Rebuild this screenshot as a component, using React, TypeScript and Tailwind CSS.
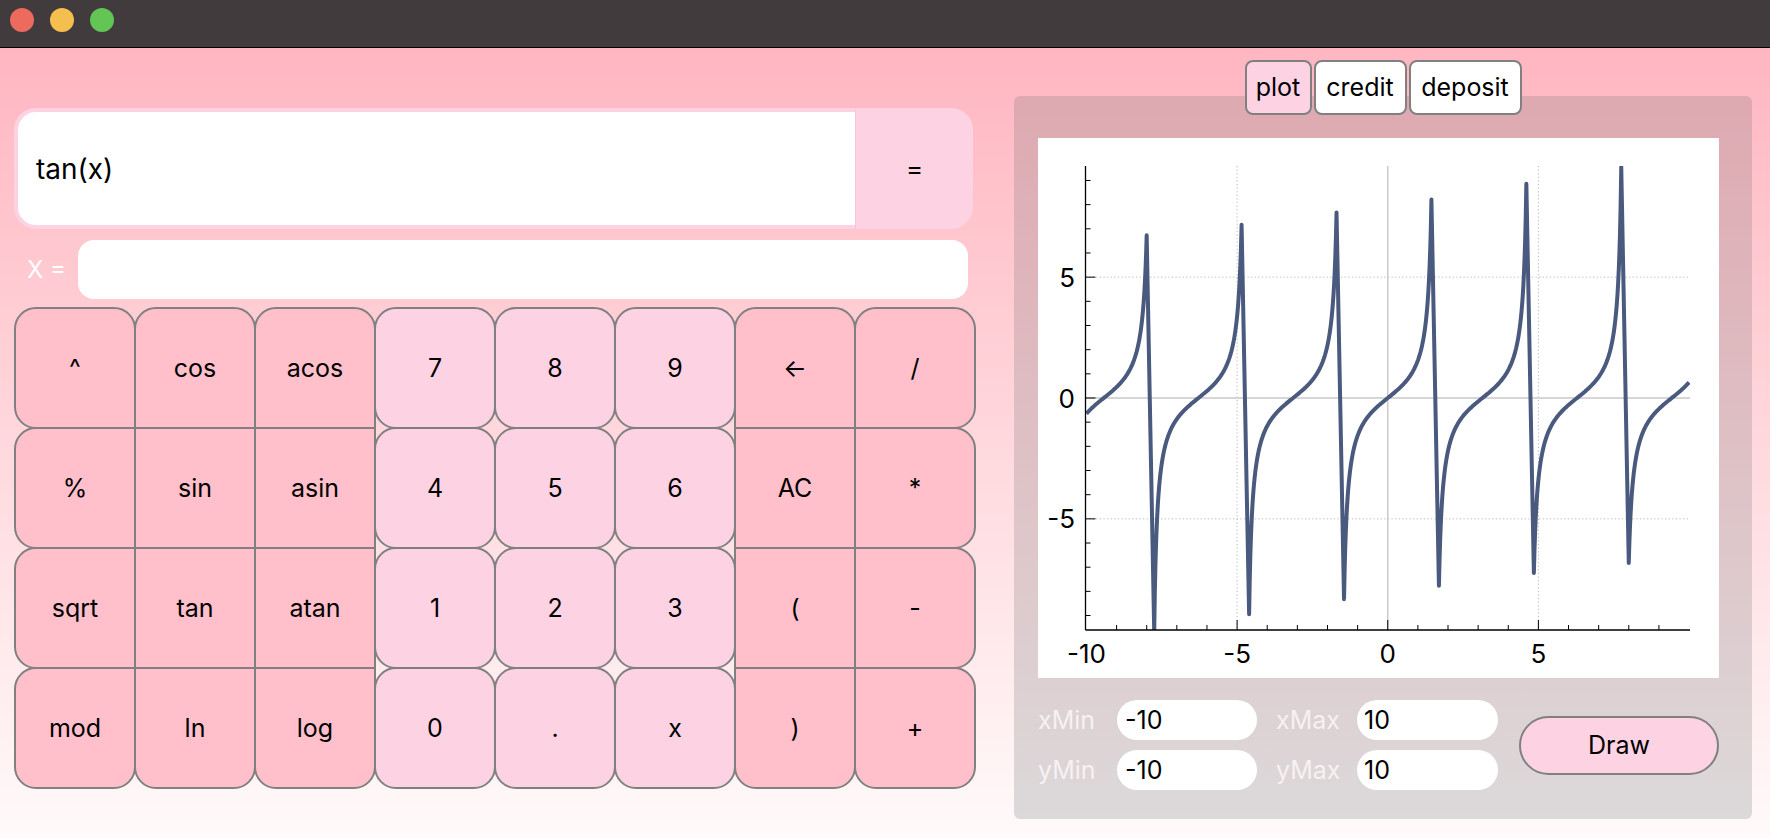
import React from "react";

type B = { t: string; d?: boolean; r: string };

const rows: B[][] = [
  [
    { t: "^", r: "rounded-tl-[22px] rounded-tr-[22px] rounded-bl-[22px]" },
    { t: "cos", r: "rounded-tl-[22px] rounded-tr-[22px]" },
    { t: "acos", r: "rounded-tl-[22px] rounded-tr-[22px]" },
    { t: "7", d: true, r: "rounded-[22px]" },
    { t: "8", d: true, r: "rounded-[22px]" },
    { t: "9", d: true, r: "rounded-[22px]" },
    { t: "←", r: "rounded-tl-[22px] rounded-tr-[22px]" },
    { t: "/", r: "rounded-tl-[22px] rounded-tr-[22px] rounded-br-[22px]" },
  ],
  [
    { t: "%", r: "rounded-tl-[22px] rounded-bl-[22px]" },
    { t: "sin", r: "" },
    { t: "asin", r: "" },
    { t: "4", d: true, r: "rounded-[22px]" },
    { t: "5", d: true, r: "rounded-[22px]" },
    { t: "6", d: true, r: "rounded-[22px]" },
    { t: "AC", r: "" },
    { t: "*", r: "rounded-tr-[22px] rounded-br-[22px]" },
  ],
  [
    { t: "sqrt", r: "rounded-tl-[22px] rounded-bl-[22px]" },
    { t: "tan", r: "" },
    { t: "atan", r: "" },
    { t: "1", d: true, r: "rounded-[22px]" },
    { t: "2", d: true, r: "rounded-[22px]" },
    { t: "3", d: true, r: "rounded-[22px]" },
    { t: "(", r: "" },
    { t: "-", r: "rounded-tr-[22px] rounded-br-[22px]" },
  ],
  [
    { t: "mod", r: "rounded-tl-[22px] rounded-bl-[22px] rounded-br-[22px]" },
    { t: "ln", r: "rounded-bl-[22px] rounded-br-[22px]" },
    { t: "log", r: "rounded-bl-[22px] rounded-br-[22px]" },
    { t: "0", d: true, r: "rounded-[22px]" },
    { t: ".", d: true, r: "rounded-[22px]" },
    { t: "x", d: true, r: "rounded-[22px]" },
    { t: ")", r: "rounded-bl-[22px] rounded-br-[22px]" },
    { t: "+", r: "rounded-tr-[22px] rounded-bl-[22px] rounded-br-[22px]" },
  ],
];

const W = 681;
const H = 540;
const X = (x: number) => 349.75 + x * 30.13;
const Y = (y: number) => 260 - y * 24.17;

function buildPath(): string {
  const A = [-2.5, -1.5, -0.5, 0.5, 1.5, 2.5].map((k) => k * Math.PI);
  const D = [0.1474, 0.1386, 0.1295, 0.1212, 0.1124, 0.1042];
  const E = [0.103, 0.1113, 0.1196, 0.128, 0.1372, 0.1454];
  const pts: [number, number][] = [];
  let start = -10;
  for (let i = 0; i <= 6; i++) {
    const end = i < 6 ? A[i] - D[i] : 10;
    for (let x = start; x < end; x += 0.02) pts.push([x, Math.tan(x)]);
    pts.push([end, Math.tan(end)]);
    if (i < 6) start = A[i] + E[i];
  }
  return pts
    .map((p, i) => `${i === 0 ? "M" : "L"}${X(p[0]).toFixed(2)} ${Y(p[1]).toFixed(2)}`)
    .join(" ");
}

function Chart() {
  const ax = 47.5;
  const axR = 652;
  const top = 28;
  const bot = 492;
  const d = buildPath();
  const ticks: number[] = [];
  for (let i = -9; i <= 9; i++) ticks.push(i);
  return (
    <svg width={W} height={H} viewBox={`0 0 ${W} ${H}`} className="block">
      <defs>
        <clipPath id="plotclip">
          <rect x={ax} y={top} width={axR - ax} height={bot - top} />
        </clipPath>
      </defs>
      {[-5, 5].map((v) => (
        <line key={"gx" + v} x1={X(v)} x2={X(v)} y1={top} y2={bot} stroke="#b8b8b8" strokeWidth={1} strokeDasharray="1.2 2.4" />
      ))}
      {[-5, 5].map((v) => (
        <line key={"gy" + v} x1={ax} x2={axR} y1={Y(v)} y2={Y(v)} stroke="#b8b8b8" strokeWidth={1} strokeDasharray="1.2 2.4" />
      ))}
      <line x1={X(0)} x2={X(0)} y1={top} y2={bot} stroke="#c8c8c8" strokeWidth={1.4} />
      <line x1={ax} x2={axR} y1={Y(0)} y2={Y(0)} stroke="#c8c8c8" strokeWidth={1.4} />
      <g clipPath="url(#plotclip)">
        <path d={d} fill="none" stroke="#4a5a7e" strokeWidth={4} strokeLinejoin="round" />
      </g>
      <line x1={ax} x2={ax} y1={top} y2={bot} stroke="#000" strokeWidth={1.3} />
      <line x1={ax} x2={axR} y1={bot} y2={bot} stroke="#000" strokeWidth={1.3} />
      {ticks.map((v) => {
        const major = v % 5 === 0;
        return <line key={"tx" + v} x1={X(v)} x2={X(v)} y1={bot} y2={bot - (major ? 10 : 5)} stroke="#000" strokeWidth={1} />;
      })}
      {ticks.map((v) => {
        const major = v % 5 === 0;
        return <line key={"ty" + v} x1={ax} x2={ax + (major ? 10 : 5)} y1={Y(v)} y2={Y(v)} stroke="#000" strokeWidth={1} />;
      })}
      {[-10, -5, 0, 5].map((v) => (
        <text key={"lx" + v} x={X(v)} y={515} textAnchor="middle" dominantBaseline="central" fontFamily="Inter, sans-serif" fontSize={26} fill="#000">
          {v}
        </text>
      ))}
      {[-5, 0, 5].map((v) => (
        <text key={"ly" + v} x={37} y={Y(v)} textAnchor="end" dominantBaseline="central" fontFamily="Inter, sans-serif" fontSize={26} fill="#000">
          {v}
        </text>
      ))}
    </svg>
  );
}

export default function App() {
  return (
    <div className="w-[1770px] h-[838px] flex flex-col overflow-hidden font-[Inter,sans-serif] text-black">
      <div className="h-[48px] shrink-0 bg-[#413b3d] border-b border-black flex items-start pt-[8px] pl-[10px] gap-[16px]">
        <div className="w-[24px] h-[24px] rounded-full bg-[#ed6a5e]" />
        <div className="w-[24px] h-[24px] rounded-full bg-[#f5bf4f]" />
        <div className="w-[24px] h-[24px] rounded-full bg-[#62c554]" />
      </div>

      <div className="flex-1 flex items-start bg-linear-to-b from-[#ffb6c1] to-[#fffafa]">
        <div className="w-[961px] ml-[14px] mt-[60px] flex flex-col">
          <div className="flex h-[121px] w-[959px]">
            <div className="flex-1 flex items-center bg-white border-4 border-r-0 border-[#fdd3e4] rounded-l-[22px] pl-[18px] text-[28px] leading-none">
              tan(x)
            </div>
            <div className="w-[118px] flex items-center justify-center bg-[#fdd3e4] rounded-r-[22px] border-l border-[#fbc6d2] text-[26px] leading-none">
              =
            </div>
          </div>

          <div className="mt-[11px] flex items-center h-[59px]">
            <div className="w-[64px] pl-[13px] text-[24px] text-white leading-none">X =</div>
            <div className="w-[890px] h-[59px] bg-white rounded-[16px]" />
          </div>

          <div className="mt-[9px] ml-[1px] grid grid-cols-[repeat(8,120px)] grid-rows-[repeat(4,120px)]">
            {rows.flat().map((b, i) => (
              <div
                key={i}
                className={`-m-px border-2 border-[#808080] flex items-center justify-center text-[25px] leading-none ${b.d ? "bg-[#fdd3e4]" : "bg-[#ffc0cb]"} ${b.r}`}
              >
                {b.t}
              </div>
            ))}
          </div>
        </div>

        <div className="w-[738px] ml-[39px] mt-[12px] flex flex-col items-center">
          <div className="relative z-10 flex gap-[2px] h-[55px]">
            <div className="w-[67px] h-[55px] border-2 border-[#808080] rounded-[8px] bg-[#fdd3e4] flex items-center justify-center text-[25px] leading-none">plot</div>
            <div className="w-[93px] h-[55px] border-2 border-[#808080] rounded-[8px] bg-white flex items-center justify-center text-[25px] leading-none">credit</div>
            <div className="w-[113px] h-[55px] border-2 border-[#808080] rounded-[8px] bg-white flex items-center justify-center text-[25px] leading-none">deposit</div>
          </div>
          <div className="-mt-[19px] w-[738px] h-[723px] rounded-[6px] bg-linear-to-b from-[#dea9b1] to-[#dcd9da] pt-[42px] pl-[24px] pr-[33px] flex flex-col">
            <div className="w-[681px] h-[540px] bg-white">
              <Chart />
            </div>
            <div className="mt-[22px] flex items-center">
              <div className="grid grid-cols-[79px_140px_19px_81px_141px] grid-rows-[40px_40px] gap-y-[10px] items-center">
                <div className="text-[25px] text-[#f7f1f2] leading-none">xMin</div>
                <div className="h-[40px] bg-white rounded-full flex items-center pl-[8px] text-[25px] leading-none">-10</div>
                <div />
                <div className="text-[25px] text-[#f7f1f2] leading-none">xMax</div>
                <div className="h-[40px] bg-white rounded-full flex items-center pl-[7px] text-[25px] leading-none">10</div>
                <div className="text-[25px] text-[#f7f1f2] leading-none">yMin</div>
                <div className="h-[40px] bg-white rounded-full flex items-center pl-[8px] text-[25px] leading-none">-10</div>
                <div />
                <div className="text-[25px] text-[#f7f1f2] leading-none">yMax</div>
                <div className="h-[40px] bg-white rounded-full flex items-center pl-[7px] text-[25px] leading-none">10</div>
              </div>
              <div className="ml-[21px] w-[200px] h-[59px] border-2 border-[#808080] rounded-full bg-[#fdd3e4] flex items-center justify-center text-[25px] leading-none">
                Draw
              </div>
            </div>
          </div>
        </div>
      </div>
    </div>
  );
}
